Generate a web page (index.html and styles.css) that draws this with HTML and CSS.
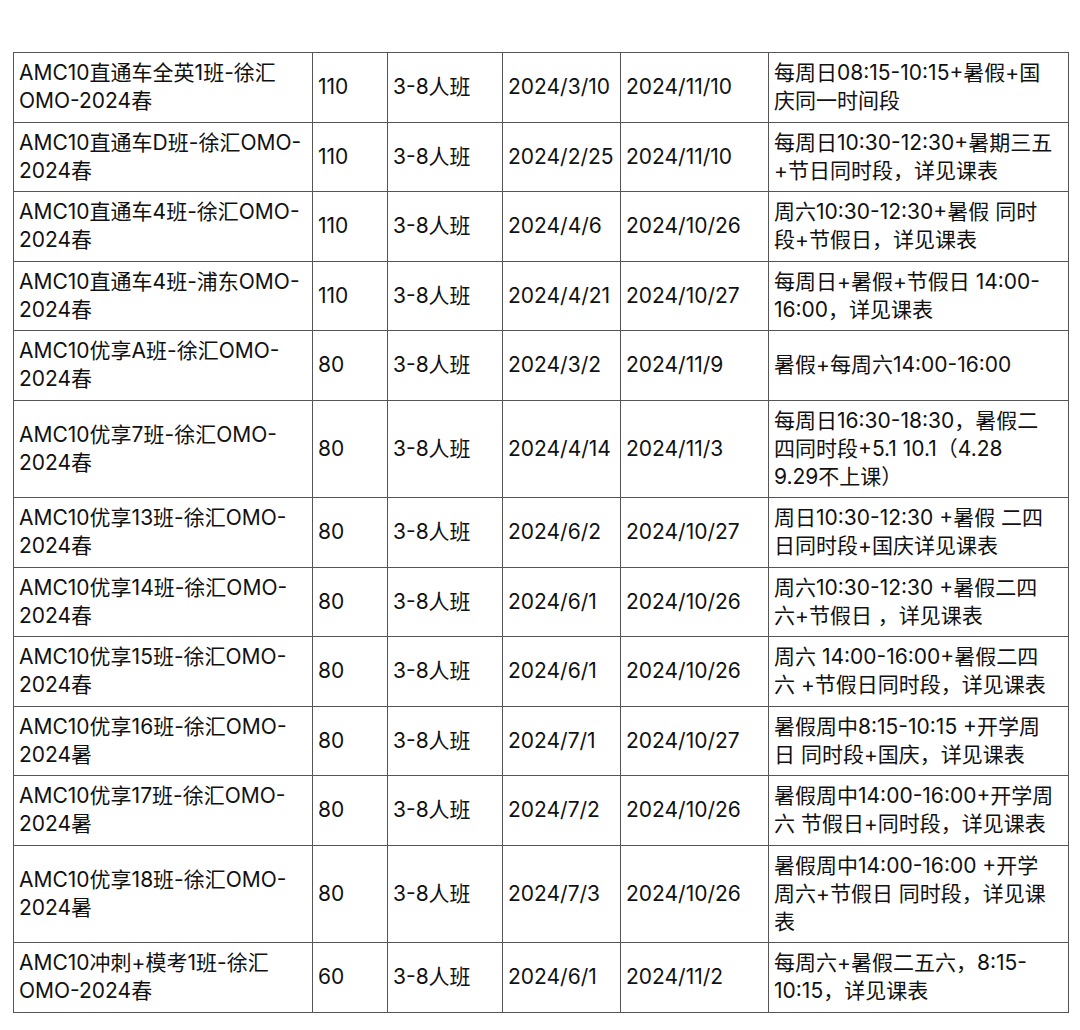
FILE: index.html
```html
<!DOCTYPE html>
<html lang="zh-CN">
<head>
<meta charset="utf-8">
<title>AMC10 课程表</title>
<link rel="stylesheet" href="styles.css">
</head>
<body>
<table class="schedule">
  <colgroup>
    <col class="c-name">
    <col class="c-price">
    <col class="c-size">
    <col class="c-start">
    <col class="c-end">
    <col class="c-time">
  </colgroup>
  <tbody>
    <tr><td>AMC10直通车全英1班-徐汇<br>OMO-2024春</td><td>110</td><td>3-8人班</td><td>2024/3/10</td><td>2024/11/10</td><td>每周日08:15-10:15+暑假+国<br>庆同一时间段</td></tr>
    <tr><td>AMC10直通车D班-徐汇OMO-<br>2024春</td><td>110</td><td>3-8人班</td><td>2024/2/25</td><td>2024/11/10</td><td>每周日10:30-12:30+暑期三五<br>+节日同时段，详见课表</td></tr>
    <tr><td>AMC10直通车4班-徐汇OMO-<br>2024春</td><td>110</td><td>3-8人班</td><td>2024/4/6</td><td>2024/10/26</td><td>周六10:30-12:30+暑假 同时<br>段+节假日，详见课表</td></tr>
    <tr><td>AMC10直通车4班-浦东OMO-<br>2024春</td><td>110</td><td>3-8人班</td><td>2024/4/21</td><td>2024/10/27</td><td>每周日+暑假+节假日 14:00-<br>16:00，详见课表</td></tr>
    <tr><td>AMC10优享A班-徐汇OMO-<br>2024春</td><td>80</td><td>3-8人班</td><td>2024/3/2</td><td>2024/11/9</td><td>暑假+每周六14:00-16:00</td></tr>
    <tr><td>AMC10优享7班-徐汇OMO-<br>2024春</td><td>80</td><td>3-8人班</td><td>2024/4/14</td><td>2024/11/3</td><td>每周日16:30-18:30，暑假二<br>四同时段+5.1 10.1（4.28<br>9.29不上课）</td></tr>
    <tr><td>AMC10优享13班-徐汇OMO-<br>2024春</td><td>80</td><td>3-8人班</td><td>2024/6/2</td><td>2024/10/27</td><td>周日10:30-12:30 +暑假 二四<br>日同时段+国庆详见课表</td></tr>
    <tr><td>AMC10优享14班-徐汇OMO-<br>2024春</td><td>80</td><td>3-8人班</td><td>2024/6/1</td><td>2024/10/26</td><td>周六10:30-12:30 +暑假二四<br>六+节假日 ，详见课表</td></tr>
    <tr><td>AMC10优享15班-徐汇OMO-<br>2024春</td><td>80</td><td>3-8人班</td><td>2024/6/1</td><td>2024/10/26</td><td>周六 14:00-16:00+暑假二四<br>六 +节假日同时段，详见课表</td></tr>
    <tr><td>AMC10优享16班-徐汇OMO-<br>2024暑</td><td>80</td><td>3-8人班</td><td>2024/7/1</td><td>2024/10/27</td><td>暑假周中8:15-10:15 +开学周<br>日 同时段+国庆，详见课表</td></tr>
    <tr><td>AMC10优享17班-徐汇OMO-<br>2024暑</td><td>80</td><td>3-8人班</td><td>2024/7/2</td><td>2024/10/26</td><td>暑假周中14:00-16:00+开学周<br>六 节假日+同时段，详见课表</td></tr>
    <tr><td>AMC10优享18班-徐汇OMO-<br>2024暑</td><td>80</td><td>3-8人班</td><td>2024/7/3</td><td>2024/10/26</td><td>暑假周中14:00-16:00 +开学<br>周六+节假日 同时段，详见课<br>表</td></tr>
    <tr><td>AMC10冲刺+模考1班-徐汇<br>OMO-2024春</td><td>60</td><td>3-8人班</td><td>2024/6/1</td><td>2024/11/2</td><td>每周六+暑假二五六，8:15-<br>10:15，详见课表</td></tr>
  </tbody>
</table>
</body>
</html>
```

FILE: styles.css
```css
html, body {
  margin: 0;
  background: #ffffff;
}

body {
  padding: 52px 0 0 13px;
  font-family: "Inter", "Noto Sans CJK SC", sans-serif;
  font-size: 21px;
  line-height: 28px;
  color: #111111;
}

.schedule {
  border-collapse: collapse;
  table-layout: fixed;
  width: 1055px;
}

.c-name { width: 299px; }
.c-price { width: 75px; }
.c-size { width: 115px; }
.c-start { width: 118px; }
.c-end { width: 148px; }
.c-time { width: 300px; }

.schedule td {
  border: 1px solid #555555;
  padding: 6.25px 5px;
  vertical-align: middle;
  text-align: left;
  white-space: nowrap;
}
```
